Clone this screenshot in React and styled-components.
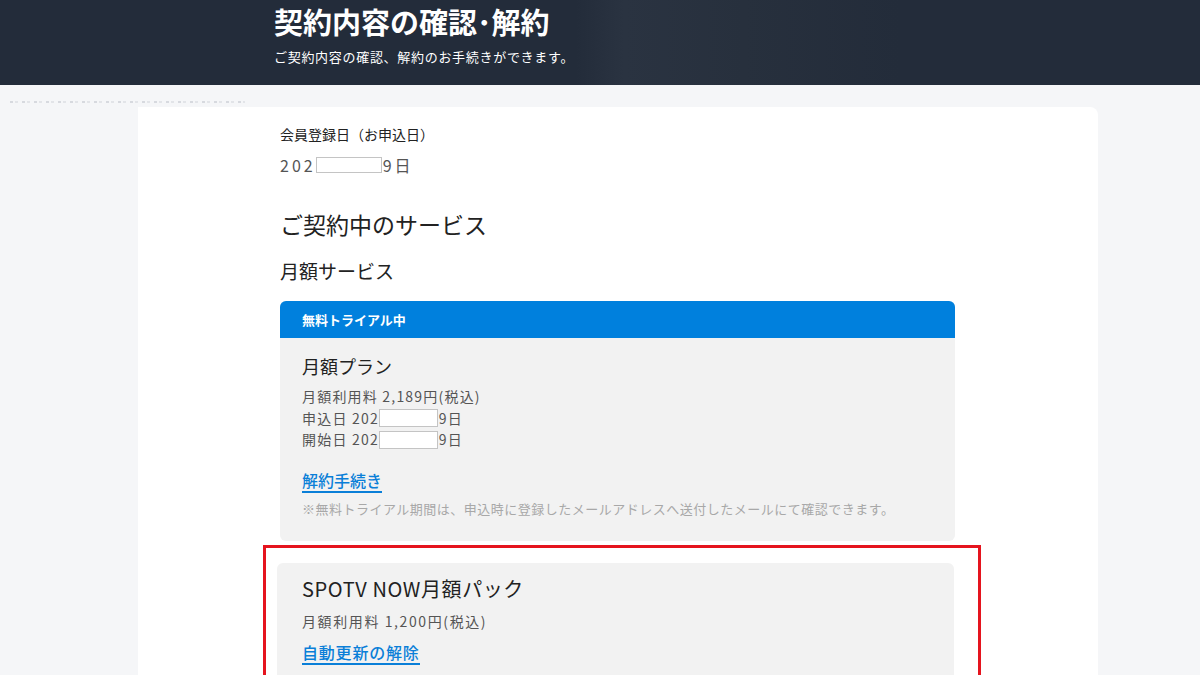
import React from 'react'
import styled, { createGlobalStyle } from 'styled-components'

const GlobalStyle = createGlobalStyle`
  html, body {
    margin: 0;
    padding: 0;
    background: #f5f6f8;
    font-family: "Noto Sans CJK JP", "Noto Sans", sans-serif;
  }
`

const Header = styled.header`
  height: 85px;
  background: linear-gradient(90deg, #232c3a 0%, #232c3a 48%, #2a3341 52%, #27303d 62%, #232c3a 75%);
  padding-left: 274px;
  box-sizing: border-box;
  color: #fff;
`

const Title = styled.h1`
  margin: 0;
  padding-top: 1px;
  font-size: 29px;
  font-weight: 700;
  line-height: 40px;
`

const Subtitle = styled.p`
  margin: 6px 0 0;
  font-size: 13px;
  line-height: 20px;
  letter-spacing: 0.7px;
`

const Crumbs = styled.div`
  height: 22px;
  position: relative;
`

const CrumbLine = styled.div`
  position: absolute;
  left: 10px;
  top: 16px;
  width: 235px;
  height: 2px;
  background: repeating-linear-gradient(90deg, #b9bdc6 0 3px, transparent 3px 5px, #d0d3d9 5px 8px, transparent 8px 12px);
  opacity: 0.5;
`

const Panel = styled.main`
  margin-left: 138px;
  width: 960px;
  min-height: 600px;
  background: #fff;
  border-radius: 0 8px 0 0;
  padding: 16px 0 0 142px;
  box-sizing: border-box;
`

const Column = styled.div`
  width: 675px;
`

const Label = styled.div`
  font-size: 14px;
  line-height: 22px;
  color: #222;
`

const DateRow = styled.div`
  display: flex;
  align-items: center;
  margin-top: 10px;
  font-size: 16px;
  line-height: 20px;
  color: #555;
  letter-spacing: 3px;
`

const Redact = styled.span`
  display: inline-block;
  width: ${p => p.w}px;
  height: ${p => p.h}px;
  margin-right: 1px;
  background: #fff;
  border: 1px solid #c4c4c4;
  box-sizing: border-box;
`

const H2 = styled.h2`
  margin: 32px 0 0;
  font-size: 23px;
  font-weight: 400;
  line-height: 34px;
  color: #222;
`

const H3 = styled.h3`
  margin: 16px 0 0;
  font-size: 19px;
  font-weight: 400;
  line-height: 28px;
  color: #222;
`

const Card = styled.section`
  background: #f2f2f2;
  border-radius: 6px;
  overflow: hidden;
  margin-top: ${p => p.mt || 0}px;
`

const CardTag = styled.div`
  height: 37px;
  background: #0080dd;
  color: #fff;
  font-size: 13px;
  font-weight: 700;
  line-height: 37px;
  padding-left: 22px;
`

const CardBody = styled.div`
  padding: ${p => p.pt}px 22px 22px ${p => p.pl}px;
`

const PlanName = styled.div`
  font-size: ${p => p.size}px;
  line-height: 26px;
  letter-spacing: ${p => p.ls || 0}px;
  color: #222;
`

const Lines = styled.div`
  margin-top: ${p => p.mt}px;
  font-size: 14px;
  line-height: 21.5px;
  color: #555;
  letter-spacing: ${p => p.ls}px;
`

const Line = styled.div`
  display: flex;
  align-items: center;
`

const Link = styled.a`
  display: inline-block;
  margin-top: ${p => p.mt}px;
  font-size: ${p => p.size}px;
  font-weight: 500;
  line-height: 22px;
  letter-spacing: ${p => p.ls || 0}px;
  color: #0a7fd8;
  text-decoration: none;
  border-bottom: 2px solid #0a7fd8;
`

const Note = styled.p`
  margin: 6px 0 0;
  font-size: 13px;
  line-height: 20px;
  letter-spacing: 0.5px;
  color: #a8a8a8;
`

const Highlight = styled.div`
  margin: 4px -26px 0 -17px;
  border: 3px solid #e5141e;
  border-bottom: none;
  padding: 15px 24px 0 11px;
  height: 200px;
`

export default function App() {
  return (
    <>
      <GlobalStyle />
      <Header>
        <Title>契約内容の確認･解約</Title>
        <Subtitle>ご契約内容の確認、解約のお手続きができます。</Subtitle>
      </Header>
      <Crumbs>
        <CrumbLine />
      </Crumbs>
      <Panel>
        <Column>
          <Label>会員登録日（お申込日）</Label>
          <DateRow>
            202<Redact w={66} h={16} />9日
          </DateRow>
          <H2>ご契約中のサービス</H2>
          <H3>月額サービス</H3>
          <Card mt={16}>
            <CardTag>無料トライアル中</CardTag>
            <CardBody pt={15} pl={22}>
              <PlanName size={18}>月額プラン</PlanName>
              <Lines mt={7} ls={1.2}>
                <Line>月額利用料 2,189円(税込)</Line>
                <Line>申込日 202<Redact w={59} h={18} />9日</Line>
                <Line>開始日 202<Redact w={59} h={18} />9日</Line>
              </Lines>
              <Link mt={18} size={16}>解約手続き</Link>
              <Note>※無料トライアル期間は、申込時に登録したメールアドレスへ送付したメールにて確認できます。</Note>
            </CardBody>
          </Card>
          <Highlight>
            <Card>
              <CardBody pt={13} pl={25}>
                <PlanName size={20} ls={0.6}>SPOTV NOW月額パック</PlanName>
                <Lines mt={9} ls={1.6}>
                  <Line>月額利用料 1,200円(税込)</Line>
                </Lines>
                <Link mt={9} size={16} ls={0.8}>自動更新の解除</Link>
              </CardBody>
            </Card>
          </Highlight>
        </Column>
      </Panel>
    </>
  )
}
